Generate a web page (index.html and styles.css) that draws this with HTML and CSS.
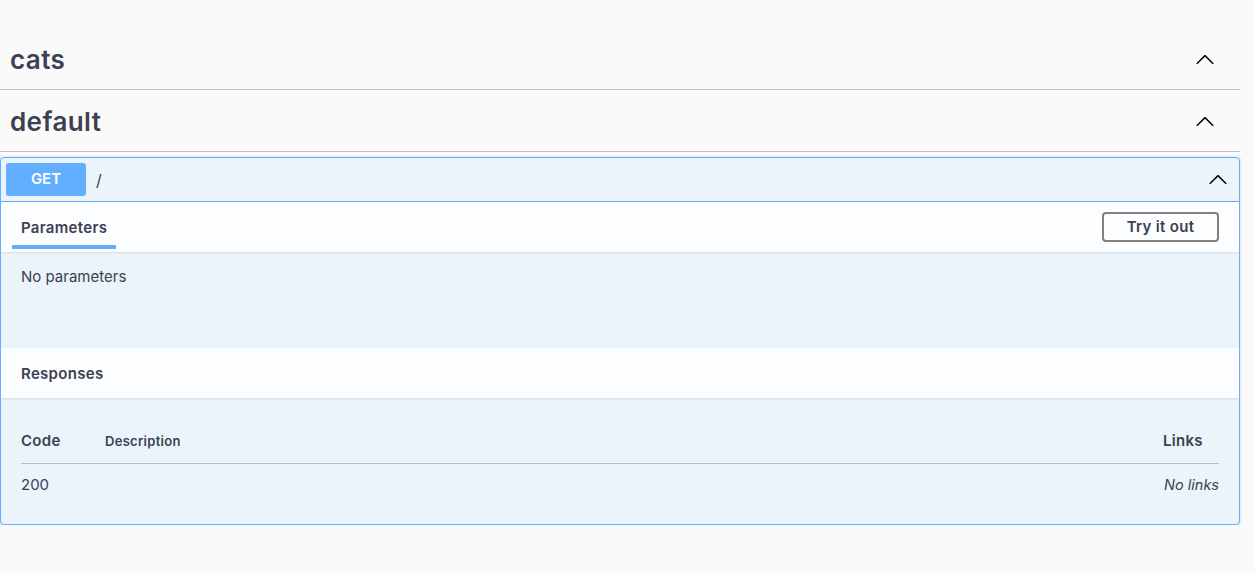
FILE: index.html
```html
<!DOCTYPE html>
<html lang="en">
<head>
<meta charset="utf-8">
<title>Swagger UI</title>
<link rel="stylesheet" href="styles.css">
</head>
<body>
<div class="wrapper">
  <section class="tag-section">
    <h3 class="tag-header">
      <span class="tag-name">cats</span>
      <button class="expand" aria-label="collapse">
        <svg width="20" height="20" viewBox="0 0 20 20"><path transform="rotate(180 10 10)" d="M17.418 6.109c.272-.268.709-.268.979 0s.271.701 0 .969l-7.908 7.83c-.27.268-.707.268-.979 0l-7.908-7.83c-.27-.268-.27-.701 0-.969.271-.268.709-.268.979 0L10 13.25l7.418-7.141z"/></svg>
      </button>
    </h3>
  </section>
  <section class="tag-section">
    <h3 class="tag-header">
      <span class="tag-name">default</span>
      <button class="expand" aria-label="collapse">
        <svg width="20" height="20" viewBox="0 0 20 20"><path transform="rotate(180 10 10)" d="M17.418 6.109c.272-.268.709-.268.979 0s.271.701 0 .969l-7.908 7.83c-.27.268-.707.268-.979 0l-7.908-7.83c-.27-.268-.27-.701 0-.969.271-.268.709-.268.979 0L10 13.25l7.418-7.141z"/></svg>
      </button>
    </h3>
    <div class="opblock">
      <div class="summary">
        <span class="method">GET</span>
        <span class="path">/</span>
        <svg class="summary-arrow" width="20" height="20" viewBox="0 0 20 20"><path transform="rotate(180 10 10)" d="M17.418 6.109c.272-.268.709-.268.979 0s.271.701 0 .969l-7.908 7.83c-.27.268-.707.268-.979 0l-7.908-7.83c-.27-.268-.27-.701 0-.969.271-.268.709-.268.979 0L10 13.25l7.418-7.141z"/></svg>
      </div>
      <div class="section-header">
        <div class="tab">Parameters</div>
        <button class="try-out">Try it out</button>
      </div>
      <div class="params-body">No parameters</div>
      <div class="section-header">
        <div class="section-title">Responses</div>
      </div>
      <div class="responses-inner">
        <div class="resp-row resp-head">
          <div class="col-code th">Code</div>
          <div class="col-desc th th-desc">Description</div>
          <div class="col-links th">Links</div>
        </div>
        <div class="resp-row">
          <div class="col-code td">200</div>
          <div class="col-desc td"></div>
          <div class="col-links td td-links">No links</div>
        </div>
      </div>
    </div>
  </section>
</div>
</body>
</html>
```

FILE: styles.css
```css
* { box-sizing: border-box; }

html, body {
  margin: 0;
  padding: 0;
  background: #fafafa;
}

body {
  font-family: Inter, "Noto Sans", "Liberation Sans", sans-serif;
  color: #3b4151;
}

.wrapper {
  width: 1240px;
  padding-top: 28px;
}

.tag-header {
  margin: 0;
  height: 62px;
  display: flex;
  align-items: center;
  justify-content: space-between;
  padding: 0 25px 0 10px;
  border-bottom: 1px solid rgba(59, 65, 81, 0.3);
  font-size: 26px;
  font-weight: 600;
  letter-spacing: 0.4px;
  color: #3b4151;
}

.tag-name {
  line-height: 30px;
  padding-top: 3px;
}

.expand {
  border: 0;
  background: none;
  padding: 0;
  margin: 2px 0 0;
  width: 20px;
  height: 20px;
  display: flex;
}

.expand svg, .summary-arrow {
  fill: #000;
}

.opblock {
  margin-top: 5px;
  border: 1px solid #61affe;
  border-radius: 4px;
  background: #ebf3fb;
  box-shadow: 0 0 3px rgba(0, 0, 0, 0.19);
  overflow: hidden;
}

.summary {
  display: flex;
  align-items: center;
  padding: 5px;
  border-bottom: 1px solid #61affe;
}

.method {
  min-width: 80px;
  padding: 5px 0 7px;
  line-height: 21px;
  text-align: center;
  font-size: 15px;
  font-weight: 600;
  color: #fff;
  background: #61affe;
  border-radius: 3px;
}

.path {
  flex: 1;
  padding: 0 10px;
  font-size: 16px;
  color: #3b4151;
}

.summary-arrow {
  margin-right: 6px;
}

.section-header {
  height: 50px;
  display: flex;
  align-items: center;
  justify-content: space-between;
  padding: 0 20px;
  background: rgba(255, 255, 255, 0.8);
  box-shadow: 0 1px 2px rgba(0, 0, 0, 0.1);
}

.tab {
  align-self: flex-end;
  margin: 0 0 3px -9px;
  padding: 1px 9px 7px;
  border-bottom: 4px solid #61affe;
  font-size: 15px;
  font-weight: 600;
  letter-spacing: 0.3px;
  line-height: 20px;
}

.try-out {
  font-family: inherit;
  font-size: 15px;
  font-weight: 600;
  letter-spacing: 0.3px;
  line-height: 16px;
  color: #3b4151;
  background: transparent;
  border: 2px solid #808080;
  border-radius: 4px;
  padding: 5px 0;
  width: 117px;
  text-align: center;
}

.params-body {
  height: 96px;
  padding: 16px 20px 0;
  font-size: 15px;
  line-height: 18px;
}

.section-title {
  font-size: 15px;
  font-weight: 600;
  letter-spacing: 0.3px;
  line-height: 20px;
  padding-top: 1px;
}

.responses-inner {
  padding: 21px 20px 21px;
}

.resp-row {
  display: flex;
  align-items: baseline;
}

.resp-head {
  border-bottom: 1px solid rgba(59, 65, 81, 0.3);
}

.col-code { width: 84px; }
.col-desc { flex: 1; }
.col-links { width: 56px; }

.th {
  padding: 13px 0 13px;
  font-size: 15px;
  font-weight: 600;
  letter-spacing: 0.3px;
  line-height: 18px;
}

.th-desc {
  font-size: 13px;
}

.td {
  padding: 12px 0 9px;
  font-size: 15px;
  line-height: 18px;
}

.td-links {
  font-size: 14.5px;
  font-style: italic;
  text-align: right;
}
```
